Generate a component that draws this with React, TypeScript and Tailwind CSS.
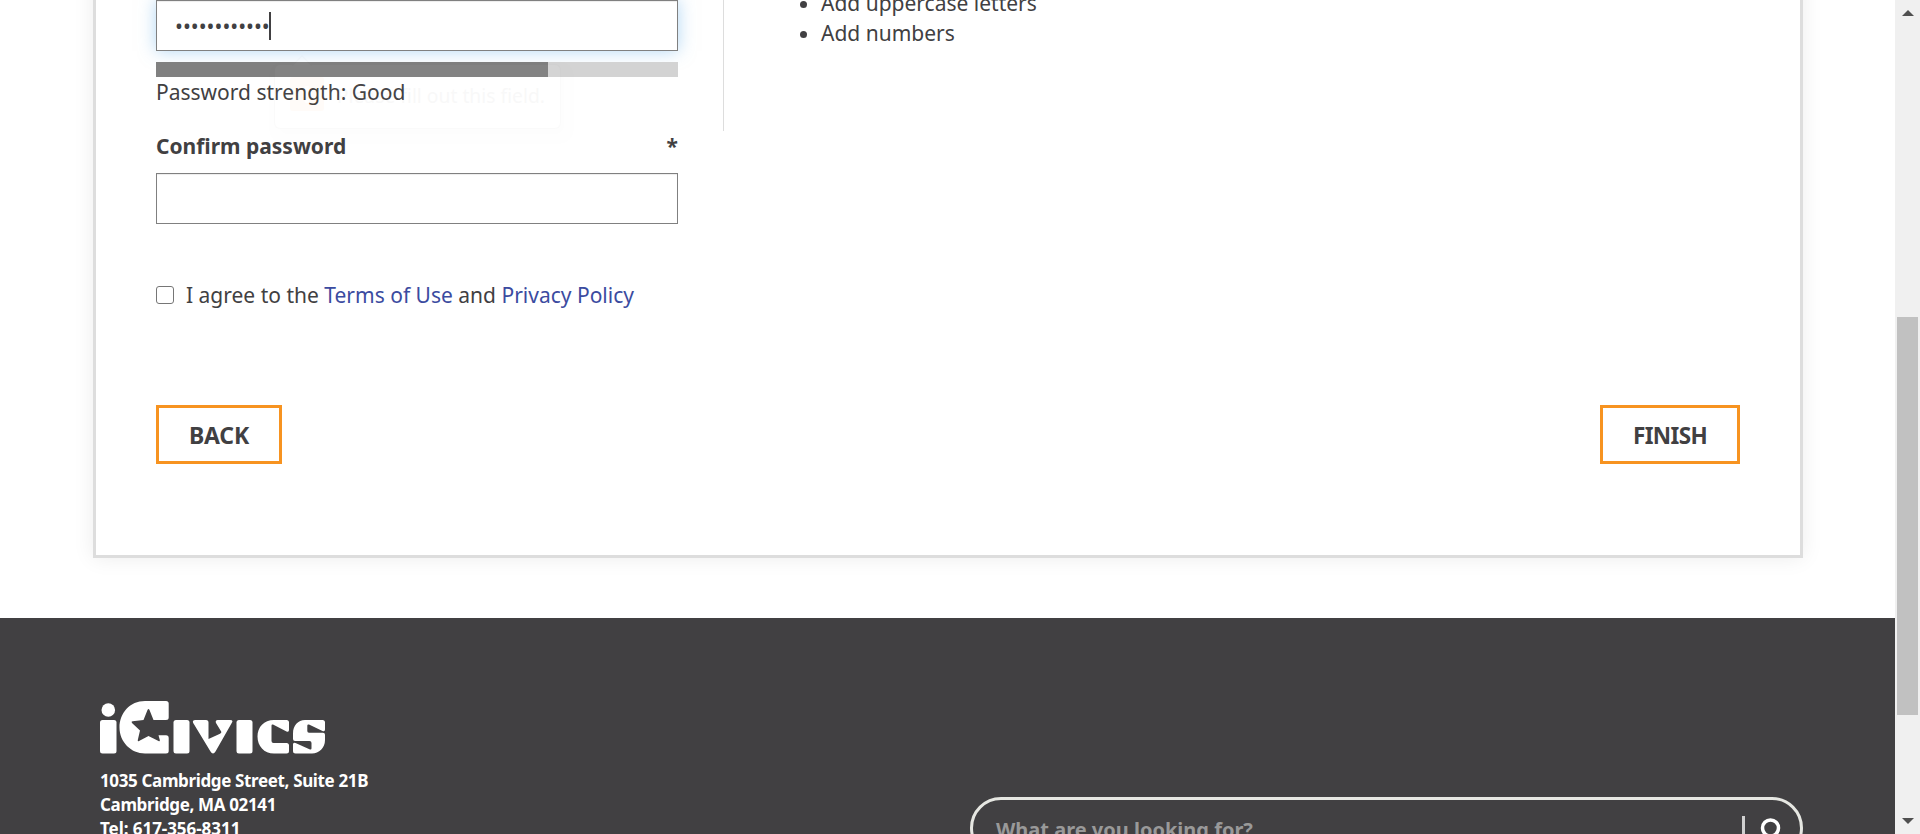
import React from "react";

const Logo = () => (
  <svg width="226" height="54" viewBox="0 0 226 54" fill="#fff" aria-label="iCivics">
    <circle cx="8.3" cy="10" r="6.8" />
    <rect x="0" y="20" width="16.5" height="33.500" rx="2.500" />
    <path d="M66 1H45C30 1 19.500 13 19.500 27.500S31 53.500 45 53.500H66q2.700 0 2.700-2.500V38q0-2.700-2.700-2.700H58.500L59.800 40q.3 1.800-1.300 1L48.500 36l-9.500 5q-1.500.8-1.200-1L40 30.500 32 23q-1.200-1.500.6-1.700L43.500 20 47.500 10q1-2 2 0L53.500 20H66q2.700 0 2.700-2.500V3.500Q68.700 1 66 1z" />
    <rect x="73.500" y="20" width="16" height="33.500" rx="2.500" />
    <path d="M95 20h11q2.500 0 2.500 2.500V39L120 33.800q2-.8 1-2.500l-5-8.300q-1-3 1.500-3H130q3.500 0 2 2.500L115.500 51.500q-2.500 4-5 0L93.200 23q-1.200-3 1.800-3z" />
    <rect x="136.500" y="20" width="16" height="33.500" rx="2.500" />
    <path d="M174 20h12.500q2.500 0 2.500 2.500V30q0 2.500-2.500 1.500L173 24.500q-1.500-.5-1.500 1.300V41q0 2 2 2H186.500q2.500 0 2.500 2.500V51q0 2.500-2.500 2.500H174c-10 0-16.500-7.500-16.500-17S164 20 174 20z" />
    <path d="M205 20h17.500q2.500 0 2.500 2.500V29.500q0 2.500-2.500 1.500L209 24.500q-1.700-.5-1.700 1.300V31q0 1.700 1.700 1.700H223q2 0 2 2V40c0 8-6 13.500-13 13.500H195.500q-2.500 0-2.500-2.500V44.500q0-2.500 2.500-1.500L210 49.500q1.500.5 1.500-1.300V43q0-2-2-2H195q-2 0-2-2V33.500c0-8 5-13.500 12-13.500z" />
  </svg>
);

const Button = ({ children, className }: { children: React.ReactNode; className: string }) => (
  <button className={`h-[59px] border-[3px] border-[#f79320] bg-white pt-[2px] font-bold text-[#414042] ${className}`}>{children}</button>
);

const FieldHint = () => (
  <div className="pointer-events-none absolute top-[64px] left-[118px] h-[65px] w-[287px] rounded-md border border-black/60 bg-white px-[15px] pt-[12px] opacity-[0.025] shadow-[4px_6px_8px_rgba(0,0,0,0.25)]">
    <span className="absolute -top-[7px] left-[20px] size-[14px] rotate-45 border-t border-l border-black/60 bg-white" />
    <div className="flex items-center gap-[13px]">
      <span className="flex size-[34px] items-center justify-center rounded-[3px] bg-[#ff8800] text-[24px] font-bold text-white">!</span>
      <span className="pt-[4px] text-[19.300px] whitespace-nowrap text-black">Please fill out this field.</span>
    </div>
  </div>
);

export default function App() {
  return (
    <div className="flex h-[834px] w-[1920px] overflow-hidden bg-white font-['Noto_Sans',sans-serif] text-[#414042]">
      <div className="flex w-[1895px] flex-col">
        <main className="h-[618px] shrink-0 pr-[92px] pl-[93px]">
          <section className="-mt-[40px] flex h-[598px] flex-col border-x-[3px] border-b-[3px] border-[#ddd] bg-white px-[60px] pt-[40px] shadow-[0_0_20px_rgba(0,0,0,0.08)]">
            <div className="flex h-[131px] shrink-0">
              <div className="relative w-[522px] shrink-0">
                <div className="flex h-[51px] items-center border border-[#808080] pl-[18px] shadow-[inset_0_1px_1px_rgba(0,0,0,0.075),0_0_16px_rgba(102,175,233,0.5)]">
                  <span className="pt-[2px] text-[21px]">••••••••••••</span>
                  <span className="-ml-px h-[28px] w-[2px] bg-[#414042]" />
                </div>
                <div className="mt-[11px] h-[15px] bg-[#d3d3d3]">
                  <div className="h-full w-3/4 bg-[#808080]" />
                </div>
                <p className="text-[21px] leading-[31px]">Password strength: Good</p>
                <FieldHint />
              </div>
              <div className="ml-[45px] w-px bg-[#ddd]" />
              <ul className="-mt-[12px] ml-[97px] list-disc text-[21px] leading-[30px]">
                <li>Add uppercase letters</li>
                <li>Add numbers</li>
              </ul>
            </div>
            <label className="flex h-[42px] w-[522px] shrink-0 justify-between text-[21px] leading-[31px] font-bold">
              <span>Confirm password</span>
              <span>*</span>
            </label>
            <div className="h-[51px] w-[522px] shrink-0 border border-[#808080] shadow-[inset_0_1px_1px_rgba(0,0,0,0.075)]" />
            <div className="mt-[55px] flex h-[32px] shrink-0 items-center text-[21px]">
              <span className="mr-[12px] size-[18px] rounded-[3px] border border-[#767676]" />
              <span className="pt-[2px]">
                I agree to the <a className="text-[#3b4ba0]">Terms of Use</a> and <a className="text-[#3b4ba0]">Privacy Policy</a>
              </span>
            </div>
            <div className="mt-[94px] flex justify-between">
              <Button className="w-[126px] text-[23px] tracking-[-0.2px]">BACK</Button>
              <Button className="w-[140px] text-[22.500px] tracking-[-0.6px]">FINISH</Button>
            </div>
          </section>
        </main>
        <footer className="flex h-[216px] shrink-0 justify-between bg-[#414042] pr-[92px] pl-[100px] text-white">
          <div className="pt-[82px]">
            <Logo />
            <address className="mt-[15px] text-[17px] leading-[24px] font-bold tracking-[-0.36px] whitespace-nowrap not-italic">
              1035 Cambridge Street, Suite 21B
              <br />
              Cambridge, MA 02141
              <br />
              <span className="tracking-[-0.05px]">Tel: 617-356-8311</span>
            </address>
          </div>
          <div className="mt-[179px] flex h-[62px] w-[833px] rounded-[31px] border-[3px] border-[#e6e7e2] pl-[23px]">
            <span className="flex-1 pt-[15px] text-[20px] font-bold text-[#999]">What are you looking for?</span>
            <span className="mt-[16px] mr-[14px] h-[30px] w-[3px] bg-[#d0d0d0]" />
            <svg className="mt-[17px] mr-[17px]" width="24" height="26" viewBox="0 0 24 26" fill="none" stroke="#fff" strokeWidth="3.500">
              <circle cx="11.500" cy="11" r="8" />
              <path d="M17 17l6 7" />
            </svg>
          </div>
        </footer>
      </div>
      <div className="flex w-[25px] flex-col items-center bg-[#f0f0f0]">
        <svg className="mt-[10px]" width="12" height="6" viewBox="0 0 12 6" fill="#505050">
          <path d="M6 0l6 6H0z" />
        </svg>
        <div className="mt-[301px] h-[398px] w-[21px] bg-[#c1c1c1]" />
        <svg className="mt-[103px]" width="12" height="6" viewBox="0 0 12 6" fill="#505050">
          <path d="M0 0h12L6 6z" />
        </svg>
      </div>
    </div>
  );
}
